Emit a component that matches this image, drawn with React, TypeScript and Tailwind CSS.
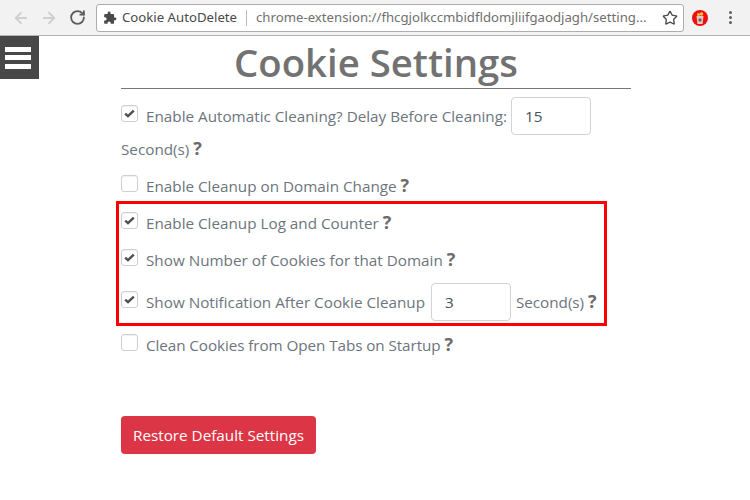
import { ArrowLeft, ArrowRight, RotateCw, Star } from "lucide-react";

function Box({ on }: { on?: boolean }) {
  return (
    <span className="w-[17px] h-[17px] mb-[6px] shrink-0 rounded-[3px] border border-[#cfcfcf] bg-white flex items-center justify-center shadow-[inset_0_1px_1px_rgba(0,0,0,0.06)]">
      {on && (
        <svg width="11" height="9" viewBox="0 0 11 9" fill="none">
          <path d="M1.2 4.6 L4 7.2 L9.8 1.6" stroke="#4f4f4f" strokeWidth="2.4" />
        </svg>
      )}
    </span>
  );
}

function Q() {
  return <span className="font-bold text-[18px] leading-none text-[#6b6b6b]">?</span>;
}

function Field({ value }: { value: string }) {
  return (
    <span className="w-[80px] h-[38px] shrink-0 rounded-[4px] border border-[#ced4da] bg-white px-[13px] flex items-center text-[#495057]">
      {value}
    </span>
  );
}

export default function App() {
  return (
    <div className="w-[750px] h-[500px] bg-white overflow-hidden text-[15.25px] text-[#6c757d] font-['Open_Sans','Noto_Sans',sans-serif]">
      <div className="h-[36px] bg-[#f2f2f2] border-b border-[#b4b4b4] flex items-center">
        <div className="w-[96px] flex items-center pl-[12px] gap-[10px] text-[#cfcfcf]">
          <ArrowLeft size={18} strokeWidth={2.4} />
          <ArrowRight size={18} strokeWidth={2.4} />
          <RotateCw size={17} strokeWidth={2.6} color="#5c5c5c" className="ml-[1px]" />
        </div>
        <div className="w-[588px] h-[28px] bg-white border border-[#aeaeae] rounded-[3px] flex items-center pl-[6px] text-[13.2px] font-['Noto_Sans',sans-serif] whitespace-nowrap">
          <svg width="14" height="14" viewBox="0 0 24 24" fill="#4a4a4a" className="shrink-0">
            <path d="M20.5 11H19V7a2 2 0 0 0-2-2h-4V3.5a2.5 2.5 0 0 0-5 0V5H4a2 2 0 0 0-2 2v3.8h1.5a2.7 2.7 0 0 1 0 5.4H2V20a2 2 0 0 0 2 2h3.8v-1.5a2.7 2.7 0 0 1 5.4 0V22H17a2 2 0 0 0 2-2v-4h1.5a2.5 2.5 0 0 0 0-5z" />
          </svg>
          <span className="ml-[5px] text-[#4a4a4a]">Cookie AutoDelete</span>
          <span className="mx-[9px] w-px h-[16px] bg-[#b9b9b9]" />
          <span className="text-[#6f6f6f]">chrome-extension://fhcgjolkccmbidfldomjliifgaodjagh/setting...</span>
          <Star size={16} strokeWidth={2} color="#4a4a4a" className="ml-auto mr-[5px] shrink-0" />
        </div>
        <svg width="16" height="16" viewBox="0 0 16 16" className="ml-[8px] shrink-0">
          <circle cx="8" cy="8" r="8" fill="#ee0f0f" />
          <path d="M4.5 6 H11.5 L10.6 14 H5.4 Z" fill="#e9c9c0" />
          <circle cx="6.5" cy="4.5" r="1.5" fill="#f5c242" />
          <circle cx="9.5" cy="4" r="1.8" fill="#f5c242" />
          <circle cx="8" cy="10" r="1.8" fill="#6b6b6b" />
        </svg>
        <div className="ml-[21px] flex flex-col gap-[2px]">
          <span className="w-[3px] h-[3px] rounded-full bg-[#5f5f5f]" />
          <span className="w-[3px] h-[3px] rounded-full bg-[#5f5f5f]" />
          <span className="w-[3px] h-[3px] rounded-full bg-[#5f5f5f]" />
        </div>
      </div>

      <div className="relative">
        <div className="absolute left-0 top-0 w-[39px] h-[43px] bg-[#484848] flex flex-col pl-[5px] justify-center gap-[3.5px]">
          <span className="w-[26px] h-[5px] bg-white" />
          <span className="w-[26px] h-[5px] bg-white" />
          <span className="w-[26px] h-[5px] bg-white" />
        </div>

        <div className="ml-[121px] w-[510px]">
          <h1 className="h-[53px] border-b border-[#777] text-center text-[38.3px] leading-[53px] font-semibold text-[#727272]">
            Cookie Settings
          </h1>

          <div className="flex items-center mt-[8px] h-[38px]">
            <Box on />
            <span className="ml-[8px] mr-[4px] whitespace-nowrap">Enable Automatic Cleaning? Delay Before Cleaning:</span>
            <Field value="15" />
          </div>
          <div className="mt-[3px] h-[22px] leading-[22px]">Second(s) <Q /></div>
          <div className="flex items-center mt-[15px] h-[22px]">
            <Box />
            <span className="ml-[8px]">Enable Cleanup on Domain Change <Q /></span>
          </div>

          <div className="border-[3px] border-[#ff0000] -ml-[5px] pl-[2px] mt-[4px] w-[491px] h-[125px] flex flex-col">
            <div className="flex items-center mt-[8px] h-[22px]">
              <Box on />
              <span className="ml-[8px]">Enable Cleanup Log and Counter <Q /></span>
            </div>
            <div className="flex items-center mt-[15px] h-[22px]">
              <Box on />
              <span className="ml-[8px]">Show Number of Cookies for that Domain <Q /></span>
            </div>
            <div className="flex items-center mt-[12px] h-[38px] whitespace-nowrap">
              <Box on />
              <span className="ml-[8px] mr-[6px]">Show Notification After Cookie Cleanup</span>
              <Field value="3" />
              <span className="ml-[5px] tracking-[-0.03px]">Second(s) <Q /></span>
            </div>
          </div>

          <div className="flex items-center mt-[8px] h-[22px]">
            <Box />
            <span className="ml-[8px] tracking-[-0.08px]">Clean Cookies from Open Tabs on Startup <Q /></span>
          </div>

          <button className="mt-[60px] w-[195px] h-[38px] rounded-[4px] bg-[#dc3545] text-white text-[15.25px]">
            Restore Default Settings
          </button>
        </div>
      </div>
    </div>
  );
}
